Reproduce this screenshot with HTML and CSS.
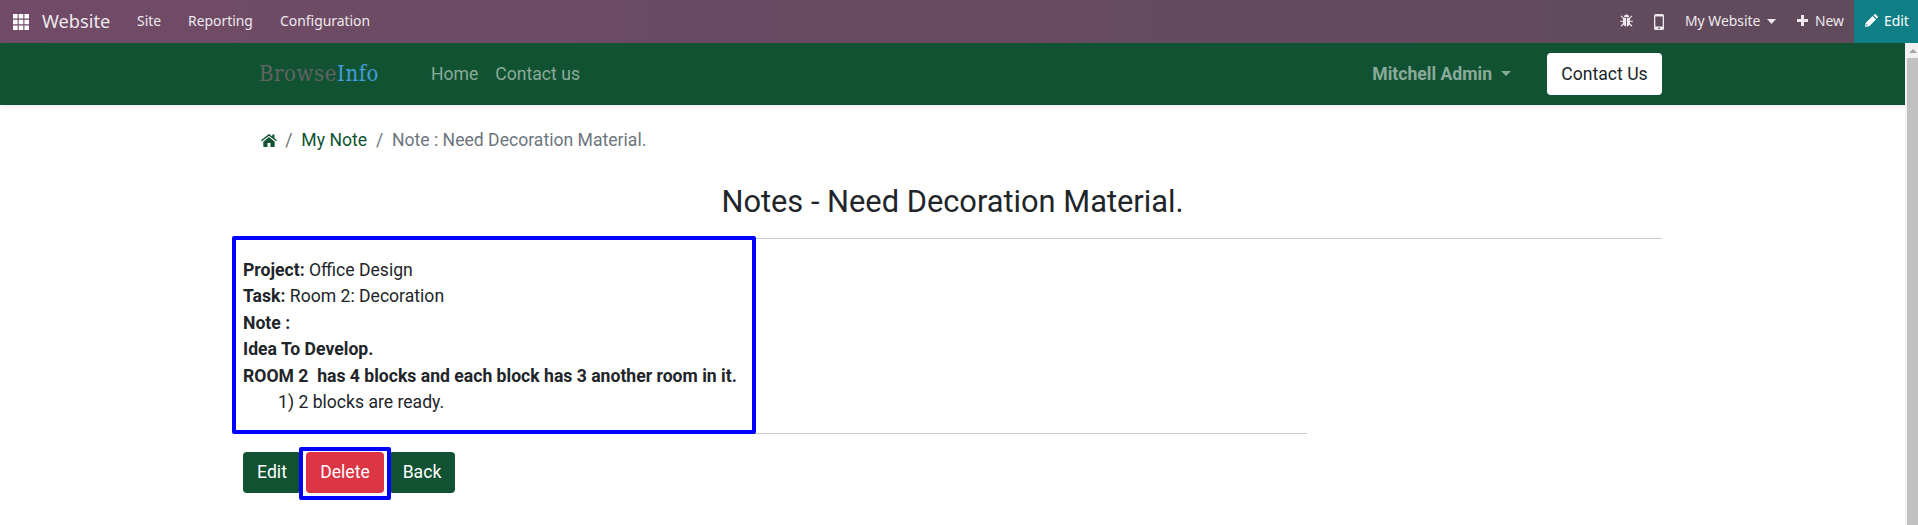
FILE: index.html
```html
<!DOCTYPE html>
<html lang="en">
<head>
<meta charset="utf-8">
<title>Notes - Need Decoration Material.</title>
<link rel="stylesheet" href="styles.css">
</head>
<body>
<nav class="topbar">
  <svg class="apps" width="16" height="16" viewBox="0 0 16 16" fill="#fff"><path d="M0 0h4.600v4.600H0zM5.700 0h4.600v4.600H5.700zM11.400 0H16v4.600h-4.600zM0 5.700h4.600v4.600H0zM5.700 5.700h4.600v4.600H5.700zM11.400 5.700H16v4.600h-4.600zM0 11.400h4.600V16H0zM5.700 11.400h4.600V16H5.700zM11.400 11.400H16V16h-4.600z"/></svg>
  <span class="brand">Website</span>
  <span class="menu site">Site</span>
  <span class="menu reporting">Reporting</span>
  <span class="menu config">Configuration</span>
  <div class="tools">
    <svg class="bug" width="13" height="13" viewBox="0 0 13 13"><g fill="#eee9ed"><path d="M3.900 3Q4 .4 6.500.4T9.100 3z"/><path d="M3 3.700h3.100v8.800Q3 12 3 8.500zM6.900 3.700H10v4.800q0 3.500-3.100 4z"/></g><path fill="none" stroke="#eee9ed" stroke-width="1.100" stroke-linecap="round" d="M1.200 2.200L3.500 4.400M11.800 2.200L9.500 4.400M.6 7.300h2.800M12.400 7.300H9.600M1.300 12l2.400-2.500M11.700 12L9.300 9.500"/></svg>
    <svg class="phone" width="10" height="16" viewBox="0 0 10 16"><path fill="#eee9ed" fill-rule="evenodd" d="M1.600 0h6.800Q10 0 10 1.600v12.800Q10 16 8.400 16H1.600Q0 16 0 14.400V1.600Q0 0 1.600 0zM1.300 2.600v9.800h7.400V2.600zM5 13.400a.9.9 0 1 0 0 1.800.9.9 0 0 0 0-1.800z"/></svg>
    <span class="menu mysite">My Website</span>
    <svg class="caret" width="9" height="5" viewBox="0 0 9 5"><path fill="#eee9ed" d="M0 0h9L4.500 5z"/></svg>
    <svg class="plus" width="11" height="11" viewBox="0 0 11 11"><path fill="#eee9ed" d="M4 0h3v4h4v3H7v4H4V7H0V4h4z"/></svg>
    <span class="menu new">New</span>
    <div class="edit">
      <svg width="13" height="13" viewBox="0 0 13 13"><path fill="#fff" fill-rule="evenodd" d="M0 13l.8-4.200L7.600 2l3.400 3.400-6.800 6.800zM1.300 11.700l1.700-.4-1.300-1.300zM8.400 1.200L9.200.4q.8-.7 1.600 0l1.800 1.800q.7.800 0 1.600l-.8.800z"/></svg>
      <span class="menu">Edit</span>
    </div>
  </div>
</nav>
<div class="frame">
  <div class="page">
    <header class="siteheader">
      <div class="container">
        <span class="logo"><span class="browse">Browse</span><span class="info">Info</span></span>
        <a class="home">Home</a>
        <a>Contact us</a>
        <div class="user">Mitchell Admin<svg width="10" height="5" viewBox="0 0 10 5"><path fill="currentColor" d="M0 0h10L5 5z"/></svg></div>
        <a class="cta">Contact Us</a>
      </div>
    </header>
    <main class="content">
      <div class="crumbs">
        <svg width="16" height="13" viewBox="0 0 16 13" fill="#115233"><path d="M2.300 7.700L8 3l5.700 4.700v4.500q0 .8-.8.800H9.500V9h-3v4H3.100q-.8 0-.8-.8zM0 6.300L7.200.4q.8-.6 1.600 0l2.500 2V.5h2.200v3.700L16 6.300l-.9 1L8 1.700.9 7.300z"/></svg>
        <i>/</i><a>My Note</a><i>/</i><span>Note : Need Decoration Material.</span>
      </div>
      <h1>Notes - Need Decoration Material.</h1>
      <div class="rule"></div>
      <div class="notes">
        <div><b>Project:</b> Office Design</div>
        <div><b>Task:</b> Room 2: Decoration</div>
        <div><b>Note :</b></div>
        <div><b>Idea To Develop.</b></div>
        <div><b>ROOM 2&nbsp; has 4 blocks and each block has 3 another room in it.</b></div>
        <div class="item">1) 2 blocks are ready.</div>
        <div class="outline"></div>
      </div>
      <div class="rule short"></div>
      <div class="actions">
        <a class="btn b-edit">Edit</a>
        <a class="btn danger">Delete<span class="outline"></span></a>
        <a class="btn b-back">Back</a>
      </div>
    </main>
  </div>
  <div class="scrollbar">
    <svg width="8" height="4" viewBox="0 0 8 4"><path fill="#a3a3a3" d="M4 0l4 4H0z"/></svg>
    <div class="thumb"></div>
  </div>
</div>
</body>
</html>
```
FILE: styles.css
```css
* { box-sizing: border-box; }
body { margin: 0; height: 525px; overflow: hidden; display: flex; flex-direction: column; background: #fff; color: #212529; font: 17.6px/26.4px Roboto, sans-serif; }
.topbar { height: 43px; flex: none; display: flex; align-items: center; background: linear-gradient(90deg, #714b67, #5f4a5b); color: #eee9ed; font-family: "Noto Sans", sans-serif; white-space: nowrap; }
.apps { margin: 0 13px; flex: none; }
.brand { font-size: 18.200px; width: 95px; line-height: 40px; padding-bottom: 2px; }
.menu { font-size: 13.900px; line-height: 40px; padding-bottom: 2px; }
.site { width: 51px; }
.reporting { width: 92px; }
.tools { margin-left: auto; display: flex; align-items: center; height: 43px; }
.bug { margin-right: 21px; margin-bottom: 3px; }
.phone { margin-right: 21px; }
.mysite { width: 75px; }
.caret { margin: 0 21px 0 7px; }
.plus { margin: 0 7px 3px 0; }
.new { width: 39px; }
.edit { width: 64px; height: 43px; padding-left: 11px; display: flex; align-items: center; gap: 6px; background: #107e85; color: #fff; }
.edit svg { margin-bottom: 2px; }
.siteheader { height: 62px; background: #115233; box-shadow: 0 2px 4px rgba(0,0,0,.075); }
.frame { flex: 1; display: flex; min-height: 0; }
.page { flex: 1; }
.container { margin-left: 259px; width: 1403px; height: 62px; display: flex; align-items: center; color: #8aab99; }
.logo { width: 172px; font: 22px/30px "DejaVu Serif Condensed", "DejaVu Serif", serif; letter-spacing: .55px; }
.browse { color: #606462; }
.info { color: #419ddc; }
.home { margin-right: 17px; }
.user { margin-left: auto; margin-right: 36px; font-weight: 700; display: flex; align-items: center; gap: 9px; }
.user svg { margin-bottom: 2px; }
.cta { width: 115px; height: 42px; margin-bottom: 1px; border-radius: 4px; background: #fff; color: #212529; line-height: 42px; text-align: center; }
.content { padding-left: 243px; width: 1662px; }
.crumbs { margin: 22px 0 0 18px; display: flex; align-items: center; color: #6c757d; }
.crumbs svg { margin-right: -.5px; }
.crumbs i { font-style: normal; margin: 0 8.800px; }
.crumbs a { color: #115233; }
h1 { margin: 30px 0 18px; font-size: 30.800px; line-height: 37px; font-weight: 400; text-align: center; }
.rule { height: 1px; background: #cacbcc; }
.notes { position: relative; padding: 17.600px 0 17.400px; }
.item { padding-left: 35px; }
.outline { position: absolute; border: 4px solid #00f; border-radius: 2px; }
.notes .outline { left: -11px; top: -3px; width: 524px; height: 198px; }
.short { width: 1064px; }
.actions { margin-top: 18px; display: flex; gap: 5px; }
.btn { height: 41px; line-height: 40px; border-radius: 4px; background: #115233; color: #fff; text-align: center; }
.b-edit { width: 58px; }
.danger { position: relative; z-index: 1; width: 78px; background: #dc3545; }
.danger::before { content: ""; position: absolute; z-index: -1; inset: -4px; border: 4px solid #fff; }
.danger .outline { left: -7px; top: -5px; width: 92px; height: 53px; }
.b-back { width: 66px; }
.scrollbar { width: 13px; background: #f1f1f1; display: flex; flex-direction: column; align-items: center; padding: 6px 0 0 2px; }
.thumb { width: 11px; flex: 1; margin-top: 5px; background: #c1c1c1; }
```
